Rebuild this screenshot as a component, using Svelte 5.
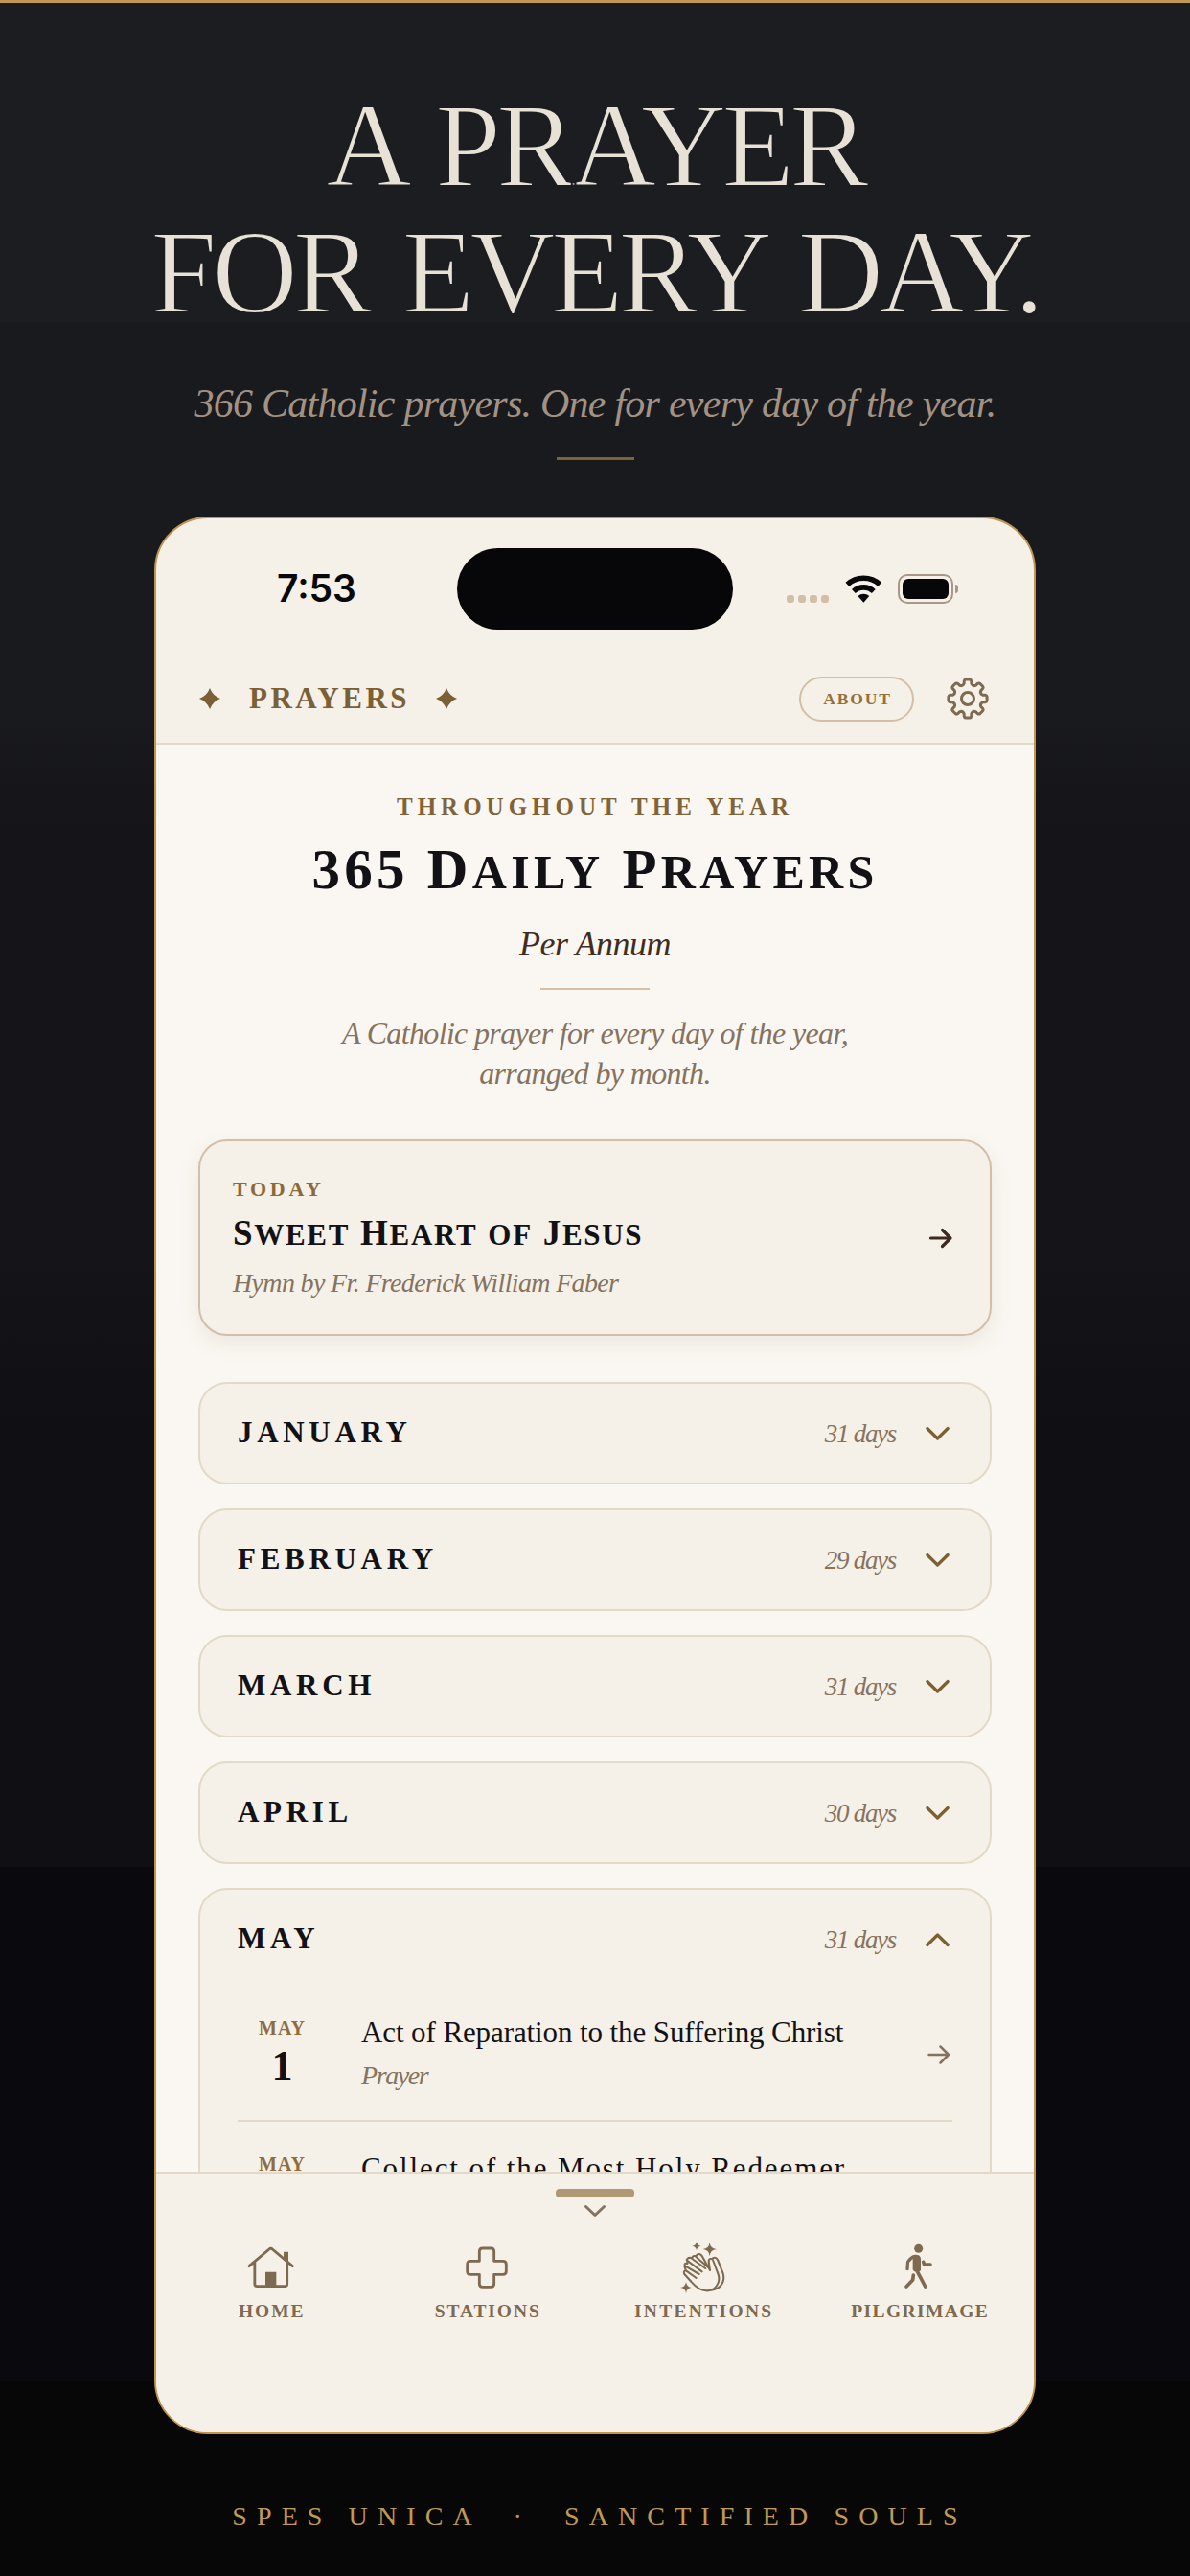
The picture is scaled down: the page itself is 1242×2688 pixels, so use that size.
<script>
  const closedMonths = [
    { name: 'January', days: 31 },
    { name: 'February', days: 29 },
    { name: 'March', days: 31 },
    { name: 'April', days: 30 }
  ];

  const mayPrayers = [
    { day: 1, title: 'Act of Reparation to the Suffering Christ', kind: 'Prayer', wide: false },
    { day: 2, title: 'Collect of the Most Holy Redeemer', kind: 'Collect', wide: true }
  ];

  const tabs = [
    { id: 'home', label: 'Home', box: '114 52 150 168' },
    { id: 'stations', label: 'Stations', box: '790 52 150 168' },
    { id: 'intentions', label: 'Intentions', box: '207 52 150 168' },
    { id: 'pilgrimage', label: 'Pilgrimage', box: '882 52 150 168' }
  ];

  // Eight-toothed outline of the settings gear, centred on the origin.
  function gearPath() {
    const at = (r, deg) => {
      const a = ((deg - 90) * Math.PI) / 180;
      return `${(r * Math.cos(a)).toFixed(2)} ${(r * Math.sin(a)).toFixed(2)}`;
    };
    let d = '';
    for (let k = 0; k < 8; k++) {
      const a = k * 45;
      d += `${k ? 'L' : 'M'}${at(16, a - 14)}L${at(18.6, a - 11.5)}Q${at(20.2, a - 10)} ${at(20.2, a - 6)}`;
      d += `L${at(20.2, a + 6)}Q${at(20.2, a + 10)} ${at(18.6, a + 11.5)}L${at(16, a + 14)}`;
      d += `Q${at(13.6, a + 22.5)} ${at(16, a + 31)}`;
    }
    return d + 'Z';
  }

  // Four-pointed sparkle with concave sides.
  function sparkle(x, y, r) {
    const c = r * 0.1;
    return `M${x} ${y - r}Q${x + c} ${y - c} ${x + r} ${y}Q${x + c} ${y + c} ${x} ${y + r}Q${x - c} ${y + c} ${x - r} ${y}Q${x - c} ${y - c} ${x} ${y - r}Z`;
  }
</script>

{#snippet star()}
  <svg class="star" viewBox="0 0 22 22"><path d="M11 0Q14 8 22 11Q14 14 11 22Q8 14 0 11Q8 8 11 0Z" /></svg>
{/snippet}

{#snippet arrow()}
  <svg class="arrow" viewBox="0 0 24 20"><path d="M1.500 10H22M13.500 1.500L22 10L13.500 18.500" /></svg>
{/snippet}

<main class="poster">
  <h1 class="headline">A PRAYER<br />FOR EVERY DAY.</h1>
  <p class="tagline">366 Catholic prayers. One for every day of the year.</p>
  <div class="tagline-rule"></div>

  <div class="phone">
    <div class="status">
      <span class="time">7:53</span>
      <div class="island"></div>
      <div class="signals">
        <div class="dots"><i></i><i></i><i></i><i></i></div>
        <svg class="wifi" viewBox="276 89 117 88">
          <path d="M282.600 119A76 76 0 0 1 385.400 119M302.200 140.400A47 47 0 0 1 365.800 140.400" fill="none" stroke="#070709" stroke-width="17" />
          <path d="M334 176L316 156A27 27 0 0 1 352 156Z" fill="#070709" />
        </svg>
        <div class="battery"><div class="charge"></div></div>
        <div class="nub"></div>
      </div>
    </div>

    <header class="bar">
      {@render star()}
      <span class="bar-title">PRAYERS</span>
      {@render star()}
      <span class="about">ABOUT</span>
      <svg class="gear" viewBox="-22 -22 44 44">
        <path d={gearPath()} />
        <circle r="6.500" />
      </svg>
    </header>

    <section class="content">
      <p class="eyebrow">THROUGHOUT THE YEAR</p>
      <h2 class="page-title">365 D<span>AILY</span> P<span>RAYERS</span></h2>
      <p class="latin">Per Annum</p>
      <div class="title-rule"></div>
      <p class="intro">A Catholic prayer for every day of the year,<br />arranged by month.</p>

      <article class="today">
        <div class="today-text">
          <p class="today-label">TODAY</p>
          <h3 class="today-title">S<span>WEET</span> H<span>EART</span> <span>OF</span> J<span>ESUS</span></h3>
          <p class="today-source">Hymn by Fr. Frederick William Faber</p>
        </div>
        {@render arrow()}
      </article>

      <div class="months">
        {#each closedMonths as month}
          <article class="month">
            <div class="month-head">
              <span class="month-name">{month.name}</span>
              <span class="days">{month.days} days</span>
              <svg class="chevron" viewBox="0 0 25 14"><path d="M1.800 1.500L12.500 12L23.200 1.500" /></svg>
            </div>
          </article>
        {/each}
        <article class="month open">
          <div class="month-head">
            <span class="month-name">May</span>
            <span class="days">31 days</span>
            <svg class="chevron" viewBox="0 0 25 14"><path d="M1.800 12.500L12.500 2L23.200 12.500" /></svg>
          </div>
          <ul class="prayers">
            {#each mayPrayers as prayer}
              <li class="prayer">
                <div class="date"><span class="date-month">MAY</span><span class="date-day">{prayer.day}</span></div>
                <div class="prayer-text">
                  <p class="prayer-title" class:wide={prayer.wide}>{prayer.title}</p>
                  <p class="prayer-kind">{prayer.kind}</p>
                </div>
                {@render arrow()}
              </li>
            {/each}
          </ul>
        </article>
      </div>
    </section>

    <nav class="tabbar">
      <div class="handle"></div>
      <svg class="collapse" viewBox="0 0 22 12"><path d="M1.500 1.500L11 10.500L20.500 1.500" /></svg>
      <div class="tabs">
        {#each tabs as tab}
          <div class="tab">
            <svg class="tab-icon" viewBox={tab.box}>
              {#if tab.id === 'home'}
                <path class="line" d="M120 135L183 82Q188 77 193 82L256 135M137.500 124V191Q137.500 198 144.500 198H232Q239 198 239 191V120" />
                <path class="solid" d="M228 90H243V124L228 112ZM171 153H205V198H171Z" />
              {:else if tab.id === 'stations'}
                <path class="line" d="M852 79H878Q888 79 888 89V119H916Q926 119 926 129V151Q926 161 916 161H888V190Q888 200 878 200H852Q842 200 842 190V161H814Q804 161 804 151V129Q804 119 814 119H842V89Q842 79 852 79Z" />
              {:else if tab.id === 'intentions'}
                <path class="fine" d="M303 148L278 103Q270 93 262 100L259 103M303 148L299 121Q298 111 307 112Q311 112 313 118L328 158C338 184 321 213 291 212C266 211 250 190 242 181L223 160Q219 152 226 149L228 149L260 172M269 160L225 134Q221 124 232 127M278 152L231 117Q231 107 243 109L289 142M227 147L223 134M233 124L230 114M247 112Q247 102 256 103L295 137M312 110Q321 105 327 115L344 158C351 182 338 206 308 210" />
                <path class="solid" d="{sparkle(261, 72, 14)}{sparkle(302, 82, 21)}{sparkle(228, 202, 18)}" />
              {:else}
                <circle class="solid" cx="956" cy="80" r="13.500" />
                <path class="solid" d="M945 99Q962 98 963 112V148Q958 156 942 151L938 146V112Q932 118 927 124L926 146Q922 152 916 146L918 120Q930 100 945 99Z" />
                <path class="limb" d="M971 122L974 130H993M951 150L962 170L977 199M940 163L938 178L918 199" />
              {/if}
            </svg>
            <span class="tab-label {tab.id}">{tab.label}</span>
          </div>
        {/each}
      </div>
    </nav>
  </div>

  <footer class="credit">SPES UNICA &nbsp;·&nbsp; SANCTIFIED SOULS</footer>
</main>

<style>
  :global(body) {
    margin: 0;
    background: #070708;
  }

  .poster {
    box-sizing: border-box;
    width: 1242px;
    height: 2688px;
    overflow: hidden;
    border-top: 3px solid #c09a55;
    display: flex;
    flex-direction: column;
    align-items: center;
    font-family: 'Liberation Serif', 'Times New Roman', serif;
    background: linear-gradient(
      #1c1d21 0, #1c1d21 333px,
      #191a1e 333px, #191a1e 740px,
      #151418 870px, #151418 1290px,
      #100f13 1490px, #100f13 1945px,
      #0a0a0e 1945px, #0a0a0e 2482px,
      #070708 2482px
    );
  }

  h1, h2, h3, p, ul {
    margin: 0;
    padding: 0;
    font-weight: 400;
    white-space: nowrap;
  }

  svg {
    display: block;
    flex: none;
    overflow: visible;
  }

  .headline {
    margin-top: 84px;
    font-size: 124px;
    line-height: 132px;
    letter-spacing: -5px;
    word-spacing: 10px;
    text-align: center;
    color: #e8e2d6;
    -webkit-text-stroke: 2px #1c1d21;
  }

  .tagline {
    margin-top: 40px;
    font-size: 42px;
    line-height: 60px;
    letter-spacing: -0.750px;
    font-style: italic;
    color: #a39283;
  }

  .tagline-rule {
    width: 81px;
    height: 3px;
    margin-top: 26px;
    background: #7d6338;
  }

  .phone {
    box-sizing: border-box;
    flex: none;
    display: flex;
    flex-direction: column;
    width: 920px;
    height: 2001px;
    margin-top: 59px;
    border: 2px solid #c09550;
    border-radius: 56px;
    overflow: hidden;
    background: #f5f0e8;
  }

  .status {
    flex: none;
    display: grid;
    grid-template-columns: 314px 288px 1fr;
    align-items: center;
    height: 146px;
  }

  .time {
    padding-left: 126px;
    font: 600 39px/50px Inter, sans-serif;
    color: #070709;
  }

  .island {
    height: 85px;
    border-radius: 43px;
    background: #070709;
  }

  .signals {
    display: flex;
    align-items: center;
    padding-left: 56px;
  }

  .dots {
    display: flex;
    gap: 4px;
    margin: 21px 17px 0 0;
  }

  .dots i {
    width: 8px;
    height: 8px;
    border-radius: 3px;
    background: #d3bfa8;
  }

  .wifi {
    width: 39px;
    height: 29px;
    margin-right: 16px;
  }

  .battery {
    box-sizing: border-box;
    width: 58px;
    height: 31px;
    padding: 3px;
    border: 2px solid #a89788;
    border-radius: 10px;
  }

  .charge {
    height: 21px;
    border-radius: 6px;
    background: #070709;
  }

  .nub {
    width: 3px;
    height: 9px;
    margin-left: 2px;
    border-radius: 0 3px 3px 0;
    background: #a89788;
  }

  .bar {
    box-sizing: border-box;
    flex: none;
    display: flex;
    align-items: center;
    height: 90px;
    padding: 0 47px 4px 45px;
    border-bottom: 2px solid #e2dac6;
  }

  .star {
    width: 22px;
    height: 22px;
    fill: #7b6035;
  }

  .bar-title {
    margin: 0 27px 0 30px;
    font-size: 31px;
    line-height: 40px;
    font-weight: 700;
    letter-spacing: 3.500px;
    color: #7b6035;
  }

  .about {
    box-sizing: border-box;
    width: 120px;
    height: 47px;
    margin-left: auto;
    border: 2px solid #d3bfa8;
    border-radius: 24px;
    font-size: 17.500px;
    line-height: 42px;
    font-weight: 700;
    letter-spacing: 1.900px;
    text-indent: 2px;
    text-align: center;
    color: #94703a;
  }

  .gear {
    width: 44px;
    height: 44px;
    margin-left: 34px;
    fill: none;
    stroke: #7e6a50;
    stroke-width: 3;
    stroke-linejoin: round;
  }

  .content {
    box-sizing: border-box;
    flex: none;
    display: flex;
    flex-direction: column;
    align-items: center;
    height: 1489px;
    padding: 48px 44px 0;
    overflow: hidden;
    background: #faf7f2;
  }

  .content > * {
    flex: none;
  }

  .eyebrow {
    font-size: 25px;
    line-height: 34px;
    font-weight: 700;
    letter-spacing: 5px;
    color: #806338;
  }

  .page-title {
    margin-top: 13px;
    font-size: 59px;
    line-height: 70px;
    font-weight: 700;
    letter-spacing: 4.300px;
    color: #121115;
  }

  .page-title span {
    font-size: 50px;
    line-height: 1;
  }

  .latin {
    margin-top: 20px;
    font-size: 36px;
    line-height: 46px;
    letter-spacing: -0.500px;
    font-style: italic;
    color: #3f2d1f;
  }

  .title-rule {
    width: 114px;
    height: 2px;
    margin-top: 23px;
    background: #d5bfa5;
  }

  .intro {
    margin-top: 24px;
    font-size: 32px;
    line-height: 42px;
    letter-spacing: -0.650px;
    font-style: italic;
    text-align: center;
    color: #85735f;
  }

  .today {
    box-sizing: border-box;
    display: flex;
    align-items: center;
    justify-content: space-between;
    width: 828px;
    height: 205px;
    margin-top: 48px;
    padding: 0 39px 0 34px;
    border: 2px solid #d3bfa8;
    border-radius: 30px;
    background: #f5f0e8;
    box-shadow: 0 8px 22px rgba(120, 95, 60, 0.1);
  }

  .today-label {
    font-size: 22px;
    line-height: 28px;
    font-weight: 700;
    letter-spacing: 3.700px;
    color: #8a6a35;
  }

  .today-title {
    margin-top: 10px;
    font-size: 37px;
    line-height: 44px;
    font-weight: 700;
    letter-spacing: 1.700px;
    color: #121115;
  }

  .today-title span {
    font-size: 31px;
    line-height: 1;
  }

  .today-source {
    margin-top: 12px;
    font-size: 28px;
    line-height: 36px;
    letter-spacing: -0.650px;
    font-style: italic;
    color: #85735f;
  }

  .arrow {
    width: 24px;
    height: 20px;
    fill: none;
    stroke: #85735f;
    stroke-width: 2.500;
    stroke-linecap: round;
    stroke-linejoin: round;
  }

  .today .arrow {
    stroke: #3d2a1c;
    stroke-width: 3.200;
  }

  .months {
    display: flex;
    flex-direction: column;
    gap: 25px;
    width: 828px;
    margin-top: 48px;
  }

  .month {
    padding: 0 39px;
    border: 2px solid #e2dac6;
    border-radius: 30px;
    background: #f5f0e8;
  }

  .month-head {
    display: flex;
    align-items: center;
    height: 103px;
  }

  .month-name {
    padding-bottom: 1px;
    font-size: 31px;
    line-height: 40px;
    font-weight: 700;
    letter-spacing: 4.700px;
    text-transform: uppercase;
    color: #121115;
  }

  .days {
    margin-left: auto;
    font-size: 27px;
    line-height: 36px;
    letter-spacing: -1.300px;
    font-style: italic;
    color: #85735f;
  }

  .chevron {
    width: 25px;
    height: 14px;
    margin: 0 3px 0 31px;
    fill: none;
    stroke: #7d5f30;
    stroke-width: 3.200;
    stroke-linecap: round;
    stroke-linejoin: round;
  }

  .prayers {
    margin-top: -3px;
    list-style: none;
  }

  .prayer {
    box-sizing: border-box;
    display: flex;
    align-items: center;
    height: 142px;
    border-bottom: 2px solid #e2dac6;
  }

  .date {
    display: flex;
    flex-direction: column;
    align-items: center;
    width: 93px;
    margin: 0 36px 3px 0;
  }

  .date-month {
    font-size: 20px;
    line-height: 20px;
    font-weight: 700;
    letter-spacing: 1px;
    color: #8f6d3a;
  }

  .date-day {
    margin-top: 10px;
    font-size: 44px;
    line-height: 40px;
    font-weight: 700;
    color: #121115;
  }

  .prayer-text {
    flex: 1;
  }

  .prayer-title {
    font-size: 31px;
    line-height: 36px;
    letter-spacing: -0.100px;
    color: #121115;
  }

  .prayer-title.wide {
    letter-spacing: 1.900px;
  }

  .prayer-kind {
    margin-top: 11px;
    font-size: 28px;
    line-height: 32px;
    letter-spacing: -1.400px;
    font-style: italic;
    color: #85735f;
  }

  .prayer .arrow {
    margin: 3px 2px 0 0;
  }

  .tabbar {
    flex: 1;
    display: flex;
    flex-direction: column;
    align-items: center;
    border-top: 2px solid #e2dac6;
    background: #f5f0e8;
  }

  .handle {
    width: 82px;
    height: 9px;
    margin-top: 16px;
    border-radius: 4px;
    background: #af9873;
  }

  .collapse {
    width: 22px;
    height: 12px;
    margin-top: 8px;
    fill: none;
    stroke: #85735f;
    stroke-width: 3;
    stroke-linecap: round;
    stroke-linejoin: round;
  }

  .tabs {
    display: grid;
    grid-template-columns: repeat(4, 225.500px);
    margin-top: 24px;
  }

  .tab {
    display: flex;
    flex-direction: column;
    align-items: center;
  }

  .tab-icon {
    width: 50px;
    height: 56px;
    fill: none;
    stroke: #7e6a50;
    stroke-linecap: round;
    stroke-linejoin: round;
  }

  .line {
    stroke-width: 8.500;
  }

  .fine {
    stroke-width: 6.200;
  }

  .limb {
    stroke-width: 11;
  }

  .solid {
    fill: #7e6a50;
    stroke: none;
  }

  .tab-label {
    margin-top: 7px;
    font-size: 19.500px;
    line-height: 24px;
    font-weight: 700;
    letter-spacing: 1.900px;
    text-indent: 1.900px;
    text-transform: uppercase;
    color: #7e6a50;
  }

  .tab-label.intentions {
    letter-spacing: 2.300px;
  }

  .tab-label.pilgrimage {
    letter-spacing: 1.400px;
  }

  .credit {
    margin-top: 66px;
    font-size: 28px;
    line-height: 40px;
    letter-spacing: 10.100px;
    text-indent: 10px;
    white-space: nowrap;
    color: #c09a55;
  }
</style>
